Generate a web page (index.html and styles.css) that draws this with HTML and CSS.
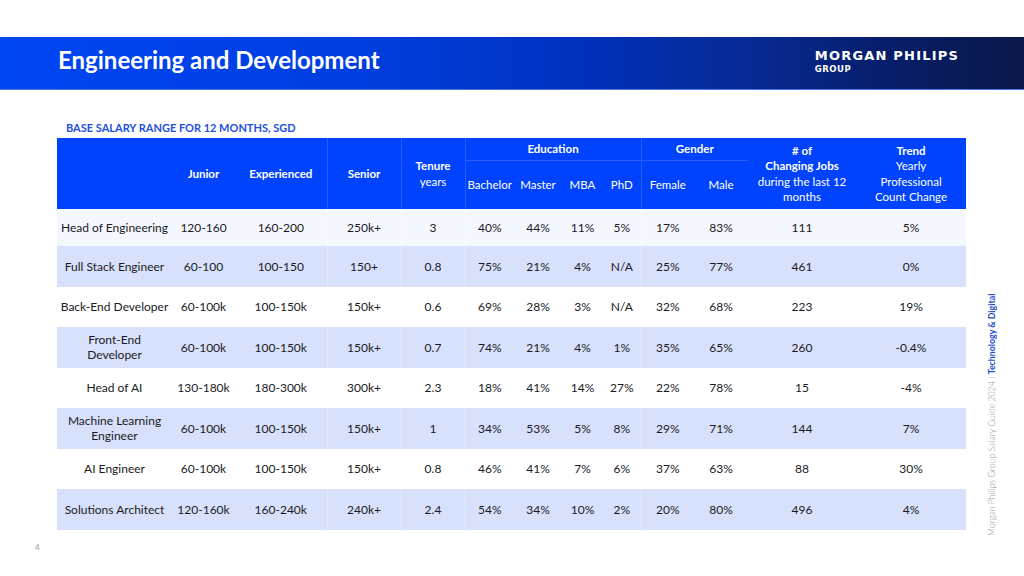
FILE: index.html
```html
<!DOCTYPE html>
<html lang="en">
<head>
<meta charset="utf-8">
<title>Engineering and Development</title>
<link rel="stylesheet" href="styles.css">
</head>
<body>
<div class="slide">
  <header class="banner">
    <h1 class="title">Engineering and Development</h1>
    <div class="logo">
      <div class="logo-main">MORGAN PHILIPS</div>
      <div class="logo-sub">GROUP</div>
    </div>
  </header>

  <main class="content">
    <h2 class="subtitle">BASE SALARY RANGE FOR 12 MONTHS, SGD</h2>
    <table class="salary">
      <colgroup>
        <col class="c-role"><col class="c-jun"><col class="c-exp"><col class="c-sen"><col class="c-ten">
        <col class="c-bac"><col class="c-mas"><col class="c-mba"><col class="c-phd">
        <col class="c-fem"><col class="c-mal"><col class="c-job"><col class="c-tre">
      </colgroup>
      <thead>
        <tr class="h1">
          <th rowspan="2"></th>
          <th rowspan="2">Junior</th>
          <th rowspan="2">Experienced</th>
          <th rowspan="2" class="sep">Senior</th>
          <th rowspan="2" class="sep">Tenure<br><span class="light">years</span></th>
          <th colspan="4" class="group sep">Education</th>
          <th colspan="2" class="group sep">Gender</th>
          <th rowspan="2" class="stack">#&nbsp;of<br>Changing Jobs<br><span class="light">during the last 12<br>months</span></th>
          <th rowspan="2" class="stack">Trend<br><span class="light">Yearly<br>Professional<br>Count Change</span></th>
        </tr>
        <tr class="h2">
          <th class="light sep">Bachelor</th>
          <th class="light">Master</th>
          <th class="light">MBA</th>
          <th class="light">PhD</th>
          <th class="light sep">Female</th>
          <th class="light">Male</th>
        </tr>
      </thead>
      <tbody>
        <tr class="r-first">
          <td>Head of Engineering</td><td>120-160</td><td>160-200</td><td class="sep">250k+</td><td class="sep">3</td>
          <td class="sep">40%</td><td>44%</td><td>11%</td><td>5%</td><td class="sep">17%</td><td>83%</td><td>111</td><td>5%</td>
        </tr>
        <tr class="r-alt">
          <td>Full Stack Engineer</td><td>60-100</td><td>100-150</td><td class="sep">150+</td><td class="sep">0.8</td>
          <td class="sep">75%</td><td>21%</td><td>4%</td><td>N/A</td><td class="sep">25%</td><td>77%</td><td>461</td><td>0%</td>
        </tr>
        <tr>
          <td>Back-End Developer</td><td>60-100k</td><td>100-150k</td><td class="sep">150k+</td><td class="sep">0.6</td>
          <td class="sep">69%</td><td>28%</td><td>3%</td><td>N/A</td><td class="sep">32%</td><td>68%</td><td>223</td><td>19%</td>
        </tr>
        <tr class="r-alt">
          <td>Front-End<br>Developer</td><td>60-100k</td><td>100-150k</td><td class="sep">150k+</td><td class="sep">0.7</td>
          <td class="sep">74%</td><td>21%</td><td>4%</td><td>1%</td><td class="sep">35%</td><td>65%</td><td>260</td><td>-0.4%</td>
        </tr>
        <tr>
          <td>Head of AI</td><td>130-180k</td><td>180-300k</td><td class="sep">300k+</td><td class="sep">2.3</td>
          <td class="sep">18%</td><td>41%</td><td>14%</td><td>27%</td><td class="sep">22%</td><td>78%</td><td>15</td><td>-4%</td>
        </tr>
        <tr class="r-alt">
          <td>Machine Learning<br>Engineer</td><td>60-100k</td><td>100-150k</td><td class="sep">150k+</td><td class="sep">1</td>
          <td class="sep">34%</td><td>53%</td><td>5%</td><td>8%</td><td class="sep">29%</td><td>71%</td><td>144</td><td>7%</td>
        </tr>
        <tr>
          <td>AI Engineer</td><td>60-100k</td><td>100-150k</td><td class="sep">150k+</td><td class="sep">0.8</td>
          <td class="sep">46%</td><td>41%</td><td>7%</td><td>6%</td><td class="sep">37%</td><td>63%</td><td>88</td><td>30%</td>
        </tr>
        <tr class="r-alt">
          <td>Solutions Architect</td><td>120-160k</td><td>160-240k</td><td class="sep">240k+</td><td class="sep">2.4</td>
          <td class="sep">54%</td><td>34%</td><td>10%</td><td>2%</td><td class="sep">20%</td><td>80%</td><td>496</td><td>4%</td>
        </tr>
      </tbody>
    </table>
  </main>

  <footer class="page-num">4</footer>

  <aside class="side-note"><span class="side-grey">Morgan Philips Group Salary Guide 2024 | </span><span class="side-blue">Technology &amp; Digital</span></aside>
</div>
</body>
</html>
```
FILE: styles.css
```css
* { box-sizing: border-box; }

html, body {
  margin: 0;
  padding: 0;
  background: #ffffff;
}

body {
  font-family: Lato, "Open Sans", sans-serif;
  color: #1a1a26;
}

.slide {
  position: relative;
  width: 1024px;
  height: 576px;
  overflow: hidden;
  padding-top: 37px;
}

.banner {
  height: 53px;
  display: flex;
  align-items: center;
  justify-content: space-between;
  padding: 0 65px 0 58px;
  background: linear-gradient(90deg, #0046f3 0%, #003ee0 35%, #0032c0 55%, #062a96 72%, #081d66 88%, #0a1748 100%);
  border-bottom: 1px solid #4a78e6;
}

.title {
  margin: 0;
  color: #ffffff;
  font-family: Lato, sans-serif;
  font-weight: 700;
  font-size: 24px;
  letter-spacing: 0;
  padding-bottom: 7px;
}

.logo {
  color: #ffffff;
  font-family: "DejaVu Sans", sans-serif;
  font-weight: 700;
  padding-bottom: 2px;
}

.logo-main {
  font-size: 13px;
  letter-spacing: 1.2px;
  line-height: 12px;
}

.logo-sub {
  font-size: 8.5px;
  letter-spacing: 0.5px;
  line-height: 10px;
  margin-top: 2px;
  font-weight: 700;
}

.content {
  padding: 0 0 0 57px;
}

.subtitle {
  margin: 0;
  padding: 31px 0 3px 9px;
  height: 48px;
  font-size: 11px;
  font-weight: 700;
  color: #1e50e0;
  line-height: 13px;
}

.salary {
  border-collapse: collapse;
  table-layout: fixed;
  width: 909px;
  font-size: 12px;
}

.c-role { width: 115px; }
.c-jun { width: 63px; }
.c-exp { width: 92px; }
.c-sen { width: 74px; }
.c-ten { width: 64px; }
.c-bac { width: 49px; }
.c-mas { width: 48px; }
.c-mba { width: 41px; }
.c-phd { width: 38px; }
.c-fem { width: 53px; }
.c-mal { width: 54px; }
.c-job { width: 108px; }
.c-tre { width: 110px; }

.salary th {
  background: #0043ff;
  color: #ffffff;
  font-weight: 700;
  font-size: 11.5px;
  text-align: center;
  padding: 0;
  line-height: 15.3px;
}

.salary th.light,
.salary th .light {
  font-weight: 400;
}

.salary th.sep { border-left: 1px solid #2a5dff; }

.salary .h1 { height: 22px; }
.salary .h2 { height: 49px; }

.salary th.group {
  border-bottom: 1px solid #2a5dff;
  vertical-align: middle;
}

.salary td {
  text-align: center;
  padding: 0;
  height: 40.5px;
  line-height: 15.3px;
}

.salary td.sep { border-left: 1px solid rgba(255, 255, 255, 0.35); }

.salary tr.r-first td { height: 37px; background: #f5f7fe; }
.salary tr.r-alt td { background: #d8e1fb; }

.page-num {
  position: absolute;
  left: 35px;
  top: 542px;
  font-size: 8px;
  color: #9a9a9a;
}

.side-note {
  position: absolute;
  left: 986px;
  top: 290px;
  height: 246px;
  writing-mode: vertical-rl;
  transform: rotate(180deg);
  font-size: 8.8px;
  line-height: 12px;
  white-space: nowrap;
  text-align: left;
}

.side-grey {
  color: #9a9a9a;
  font-weight: 300;
}

.side-blue {
  color: #1f4fd0;
  font-weight: 700;
}
```
